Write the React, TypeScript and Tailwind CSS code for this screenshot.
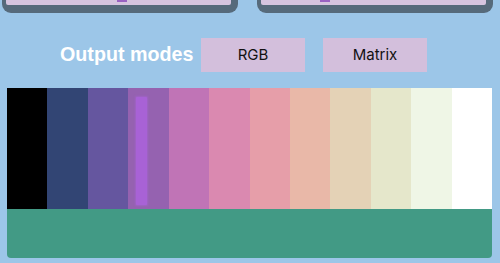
const swatches = [
  "#000000",
  "#324574",
  "#65569f",
  "#9562b0",
  "#c074b6",
  "#da89b0",
  "#e69ea9",
  "#e9b8a8",
  "#e4d2b6",
  "#e5e7cb",
  "#eff6e6",
  "#ffffff",
];

function TopCard({ markLeft }: { markLeft: string }) {
  return (
    <div className="h-[13px] rounded-b-[9px] bg-[#566a7b] pb-[8px] pl-[4px] pr-[7px]">
      <div className="relative h-[5px] rounded-b-[2px] bg-[#d6c4df]">
        <div className={`absolute top-0 h-[2px] w-[10px] bg-[#9a62c2] ${markLeft}`} />
      </div>
    </div>
  );
}

function ModeButton({ label }: { label: string }) {
  return (
    <button className="flex h-[34px] w-[104px] items-center justify-center bg-[#d3bfdc] font-['Inter'] text-[15px] text-[#111]">
      {label}
    </button>
  );
}

export default function App() {
  return (
    <div className="h-[263px] w-[500px] overflow-hidden bg-[#9cc6e8]">
      <div className="flex gap-[19px] pl-[2px] pr-[7px]">
        <div className="w-[236px]">
          <TopCard markLeft="left-[111px]" />
        </div>
        <div className="w-[236px]">
          <TopCard markLeft="left-[59px]" />
        </div>
      </div>

      <div className="mt-[25px] flex items-center pl-[60px]">
        <h2 className="w-[141px] font-['Liberation_Sans',sans-serif] text-[19.7px] font-bold text-white">
          Output modes
        </h2>
        <ModeButton label="RGB" />
        <div className="w-[18px]" />
        <ModeButton label="Matrix" />
      </div>

      <div className="ml-[7px] mt-[16px] w-[485px]">
        <div className="grid h-[121px] grid-cols-12">
          {swatches.map((c, i) => (
            <div key={c} className="relative" style={{ backgroundColor: c }}>
              {i === 3 && (
                <div className="absolute left-[8px] top-[9px] h-[108px] w-[11px] rounded-[1px] bg-[#a862d6] shadow-[0_0_2px_1px_rgba(168,98,214,0.6)]" />
              )}
            </div>
          ))}
        </div>
        <div className="h-[49px] rounded-b-[4px] bg-[#429a85]" />
      </div>
    </div>
  );
}
